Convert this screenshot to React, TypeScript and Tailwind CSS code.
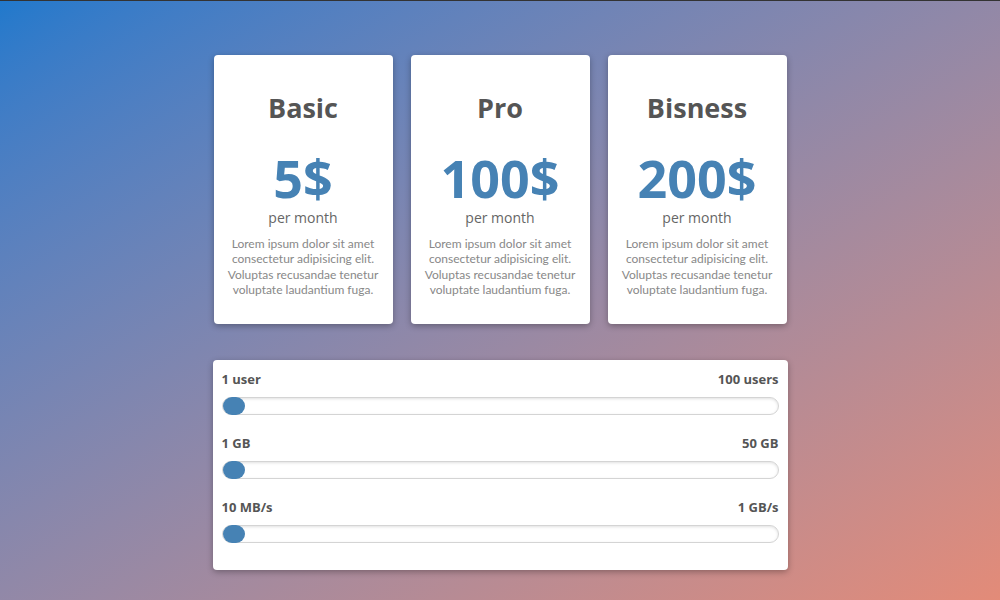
export default function App() {
  const plans = [
    { name: "Basic", price: "5$" },
    { name: "Pro", price: "100$" },
    { name: "Bisness", price: "200$" },
  ];

  const ranges = [
    { min: "1 user", max: "100 users" },
    { min: "1 GB", max: "50 GB" },
    { min: "10 MB/s", max: "1 GB/s" },
  ];

  return (
    <div
      className="w-[1000px] h-[600px] border-t border-[#333] bg-gradient-to-br from-[#2079cc] to-[#e38b78] flex flex-col items-center pt-[54px]"
      style={{ fontFamily: '"Open Sans", "Noto Sans", sans-serif' }}
    >
      <div className="flex gap-[18px]">
        {plans.map((plan) => (
          <div
            key={plan.name}
            className="w-[179px] h-[269px] bg-white rounded-[4px] shadow-[0_2px_6px_rgba(0,0,0,0.3)] flex flex-col items-center px-[8px] pt-[36px] text-center"
          >
            <h2 className="text-[27px] font-bold text-[#555] leading-[34px]">
              {plan.name}
            </h2>
            <div className="text-[52px] font-bold text-[#4682b4] leading-[52px] mt-[27px]">
              {plan.price}
            </div>
            <p className="text-[14px] text-[#666] leading-[20px] mt-[4px]">
              per month
            </p>
            <p className="text-[12px] text-[#888] leading-[15.3px] mt-[8px] font-['Lato',sans-serif]">
              Lorem ipsum dolor sit amet consectetur adipisicing elit.
              Voluptas recusandae tenetur voluptate laudantium fuga.
            </p>
          </div>
        ))}
      </div>

      <div className="w-[575px] mt-[36px] bg-white rounded-[4px] shadow-[0_2px_6px_rgba(0,0,0,0.3)] px-[9px] pt-[10px] pb-[27px] flex flex-col gap-[19px]">
        {ranges.map((r) => (
          <div key={r.min}>
            <div className="flex justify-between text-[13px] font-bold text-[#555] leading-[18px]">
              <span>{r.min}</span>
              <span>{r.max}</span>
            </div>
            <div className="relative mt-[9px] h-[18px] rounded-full border border-[#d4d4d4] shadow-[inset_0_1px_3px_rgba(0,0,0,0.12)] bg-white">
              <div className="absolute left-0 top-[-1px] w-[22px] h-[18px] rounded-full bg-[#4682b4]" />
            </div>
          </div>
        ))}
      </div>
    </div>
  );
}
